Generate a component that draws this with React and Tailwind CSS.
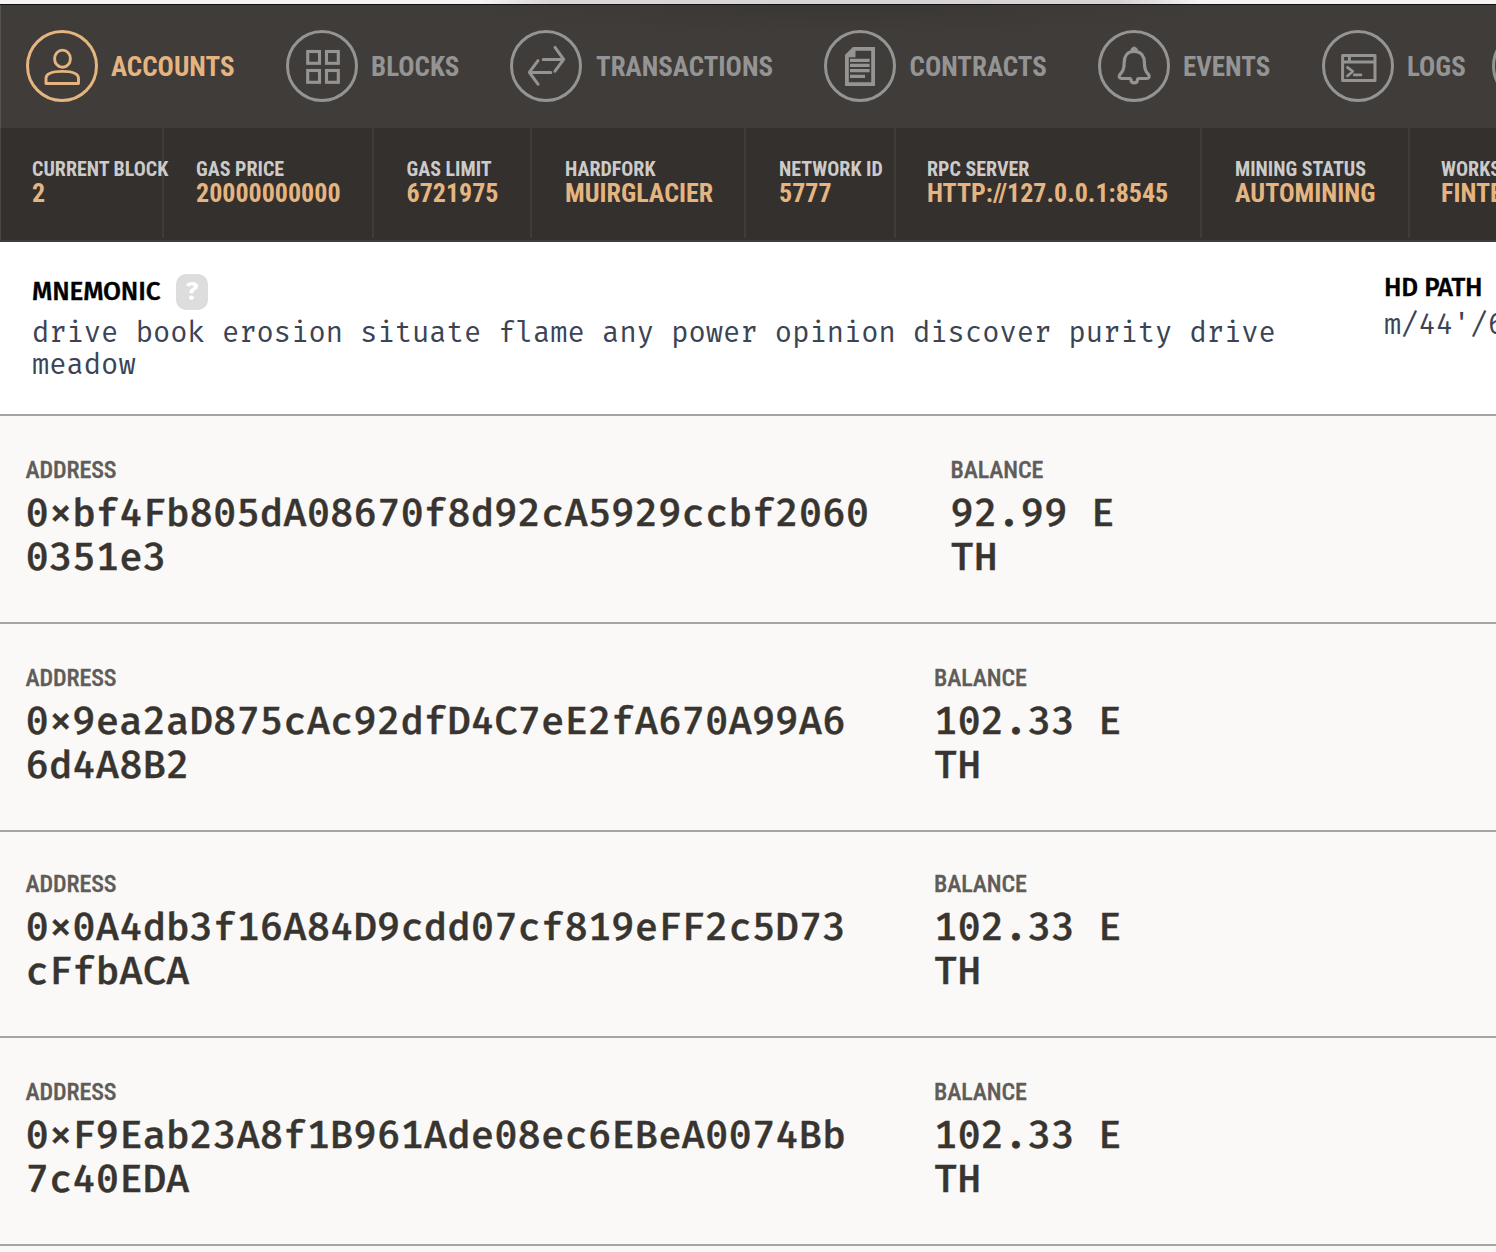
const icons = {
  accounts: (
    <g strokeWidth="2.9">
      <ellipse cx="36.5" cy="28.7" rx="7.9" ry="8.6" />
      <path d="M20 53.5V48.5C20 43.5 26 41.4 36.3 41.4S52.5 43.5 52.5 48.5V53.5Z" />
    </g>
  ),
  blocks: (
    <g strokeWidth="3.1" strokeLinejoin="miter">
      <rect x="21.7" y="21.5" width="11.8" height="11.8" />
      <rect x="40.5" y="21.5" width="11.8" height="11.8" />
      <rect x="21.7" y="40.5" width="11.8" height="11.8" />
      <rect x="40.5" y="40.5" width="11.8" height="11.8" />
    </g>
  ),
  transactions: (
    <g strokeWidth="3" strokeLinecap="round">
      <path d="M33.2 29.4H53.6M45 17.4L53.7 29.4L45 41.2" />
      <path d="M40.8 42.4H19.4M28 30.6L19.3 42.4L28 54.2" />
    </g>
  ),
  contracts: (
    <g strokeLinejoin="miter">
      <path strokeWidth="3.8" d="M22.9 26V54.1H49.1V18.9H30.2L22.9 26.2Z" />
      <path className="fill-current" stroke="none" d="M21 25L29 17H31.5V27.2H21Z" />
      <path strokeWidth="3.2" d="M26 30.4H45.6M26 35.3H45.6M26 40.7H45.6M26 46.3H41" />
    </g>
  ),
  events: (
    <g strokeWidth="3.2">
      <path className="fill-current" strokeWidth="1" d="M32.9 20.6C33 15.9 39.4 15.9 39.5 20.6Z" />
      <path d="M36.2 21.4C29 21.4 26.2 26.8 26.2 32.4C26.2 39.2 25 41.6 22.2 44.2C20.2 46.2 21.2 48.5 23.4 48.5H31.8C33 48.5 32.9 49.4 33 50.2C33.4 53.8 39 53.8 39.4 50.2C39.5 49.4 39.4 48.5 40.6 48.5H49C51.2 48.5 52.2 46.2 50.2 44.2C47.4 41.6 46.4 39.2 46.4 32.4C46.4 26.8 43.4 21.4 36.2 21.4Z" />
    </g>
  ),
  logs: (
    <g strokeWidth="3">
      <path d="M20.6 25.4H53V50.4H20.6ZM20.6 32H53M27.4 25.4V31.7" />
      <path strokeLinecap="round" d="M25.4 37.4L30.8 41.4L25.4 46M32.2 44.9H39" strokeWidth="2.6" />
    </g>
  ),
};

const tabs = [
  { icon: "accounts", label: "ACCOUNTS", box: "w-[260px] gap-[13px] text-[#e4b581]" },
  { icon: "blocks", label: "BLOCKS", box: "w-[224px] gap-[13px] text-[#949494]" },
  { icon: "transactions", label: "TRANSACTIONS", box: "w-[314px] gap-[14px] text-[#949494]" },
  { icon: "contracts", label: "CONTRACTS", box: "w-[274px] gap-[13.5px] text-[#949494]" },
  { icon: "events", label: "EVENTS", box: "w-[224px] gap-[13px] text-[#949494]" },
  { icon: "logs", label: "LOGS", box: "w-[170px] gap-[13px] text-[#949494]" },
  { icon: "search", label: "", box: "w-[72px] text-[#949494]" },
];

const stats = [
  { label: "CURRENT BLOCK", value: "2", box: "w-[164px] pl-8" },
  { label: "GAS PRICE", value: "20000000000", box: "w-[210px] pl-8" },
  { label: "GAS LIMIT", value: "6721975", box: "w-[158px] pl-[32.5px]" },
  { label: "HARDFORK", value: "MUIRGLACIER", box: "w-[214px] pl-[33px]" },
  { label: "NETWORK ID", value: "5777", box: "w-[150px] pl-[33px]" },
  { label: "RPC SERVER", value: "HTTP://127.0.0.1:8545", box: "w-[306px] pl-[31px]" },
  { label: "MINING STATUS", value: "AUTOMINING", box: "w-[208px] pl-[33px]" },
  { label: "WORKS", value: "FINTE", box: "w-[160px] pl-[31px]" },
];

const accounts = [
  { address: "0xbf4Fb805dA08670f8d92cA5929ccbf20600351e3", balance: "92.99 ETH", row: "h-[208px] pt-[40px]", col: "w-[925px] pr-[70px]", end: "w-[174px]" },
  { address: "0x9ea2aD875cAc92dfD4C7eE2fA670A99A66d4A8B2", balance: "102.33 ETH", row: "h-[208px] pt-[40px]", col: "w-[908.5px] pr-[72px]", end: "w-[190px]" },
  { address: "0x0A4db3f16A84D9cdd07cf819eFF2c5D73cFfbACA", balance: "102.33 ETH", row: "h-[206px] pt-[38px]", col: "w-[908.5px] pr-[72px]", end: "w-[190px]" },
  { address: "0xF9Eab23A8f1B961Ade08ec6EBeA0074Bb7c40EDA", balance: "102.33 ETH", row: "h-[208px] pt-[40px]", col: "w-[908.5px] pr-[72px]", end: "w-[190px]" },
];

function Tab({ icon, label, box }) {
  return (
    <div className={`flex shrink-0 items-center ${box}`}>
      <svg viewBox="0 0 72 72" className="size-[72px] shrink-0" fill="none" stroke="currentColor" strokeLinejoin="round">
        <circle cx="36" cy="36" r="34.5" strokeWidth="3" />
        {icons[icon]}
      </svg>
      <span className="pt-0.5 text-[27px] leading-8 font-bold">{label}</span>
    </div>
  );
}

function Stat({ label, value, box }) {
  return (
    <div className={`h-[110px] shrink-0 border-r-2 border-[#403c39] pt-[29px] whitespace-nowrap ${box}`}>
      <div className="text-[20px] leading-6 font-bold text-[#cdcbc9]">{label}</div>
      <div className="text-[26px] leading-6 font-bold text-[#e4b581]">{value}</div>
    </div>
  );
}

function Field({ label, value, box }) {
  return (
    <div className={`shrink-0 ${box}`}>
      <div className="font-['Roboto_Condensed','Roboto',sans-serif] text-[24px] leading-7 font-medium tracking-[-0.1px] text-[#5f5c59] [-webkit-text-stroke:0.3px]">{label}</div>
      <div className="mt-[9px] font-['Fira_Code','Liberation_Mono',monospace] text-[38.1px] leading-11 font-medium break-all text-[#38342f] [-webkit-text-stroke:0.4px] [font-feature-settings:'zero','calt']">{value}</div>
    </div>
  );
}

export default function App() {
  return (
    <div className="h-[1252px] w-[1496px] overflow-hidden bg-[#faf9f7]">
      <div className="h-1 bg-[linear-gradient(90deg,#f5f3f5_480px,#d9d5d9_550px,#d6d2d5_1120px,#f5f3f5_1200px)]" />
      <header className="border-t border-t-[#161412] bg-[#403c39] font-['Roboto_Condensed','Roboto',sans-serif]">
        <nav className="flex h-[123px] items-center border-l border-[#55514e] bg-[radial-gradient(ellipse_400px_30px_at_840px_0px,#393735,#403c39)] pb-0.5 pl-[25px]">
          {tabs.map((tab) => (
            <Tab key={tab.icon} {...tab} />
          ))}
        </nav>
        <div className="flex h-[114px] border-b-2 border-[#403c39] bg-[linear-gradient(90deg,#4a4643_1px,#34302d_1px)]">
          {stats.map((stat) => (
            <Stat key={stat.label} {...stat} />
          ))}
        </div>
      </header>
      <section className="flex h-[174px] border-b-2 border-[#a6a4a3] bg-white pt-8 pl-8">
        <div className="w-[1352px] shrink-0">
          <div className="flex items-center">
            <h2 className="w-36 font-['Fira_Sans','Open_Sans',sans-serif] text-[26px] leading-8 font-medium tracking-[-0.15px] text-black [-webkit-text-stroke:0.4px]">MNEMONIC</h2>
            <span className="flex h-9 w-8 items-center justify-center rounded-[10px] bg-[#dddddd] font-['Fira_Sans','Open_Sans',sans-serif] text-[26px] leading-8 font-bold text-white">?</span>
          </div>
          <p className="mt-2 w-[1290px] font-['Fira_Code','Liberation_Mono',monospace] text-[28px] leading-8 tracking-[0.045px] text-[#3b4455]">
            drive book erosion situate flame any power opinion discover purity drive meadow
          </p>
        </div>
        <div className="shrink-0 whitespace-nowrap">
          <h2 className="font-['Fira_Sans','Open_Sans',sans-serif] text-[26px] leading-7 font-medium tracking-[-0.2px] text-black [-webkit-text-stroke:0.4px]">HD PATH</h2>
          <p className="mt-2 font-['Fira_Code','Liberation_Mono',monospace] text-[28px] leading-8 tracking-[0.045px] text-[#3b4455]">m/44'/6</p>
        </div>
      </section>
      <main>
        {accounts.map(({ address, balance, row, col, end }) => (
          <div key={address} className={`flex border-b-2 border-[#a6a4a3] pl-[25.5px] ${row}`}>
            <Field label="ADDRESS" value={address} box={col} />
            <Field label="BALANCE" value={balance} box={end} />
          </div>
        ))}
      </main>
    </div>
  );
}
